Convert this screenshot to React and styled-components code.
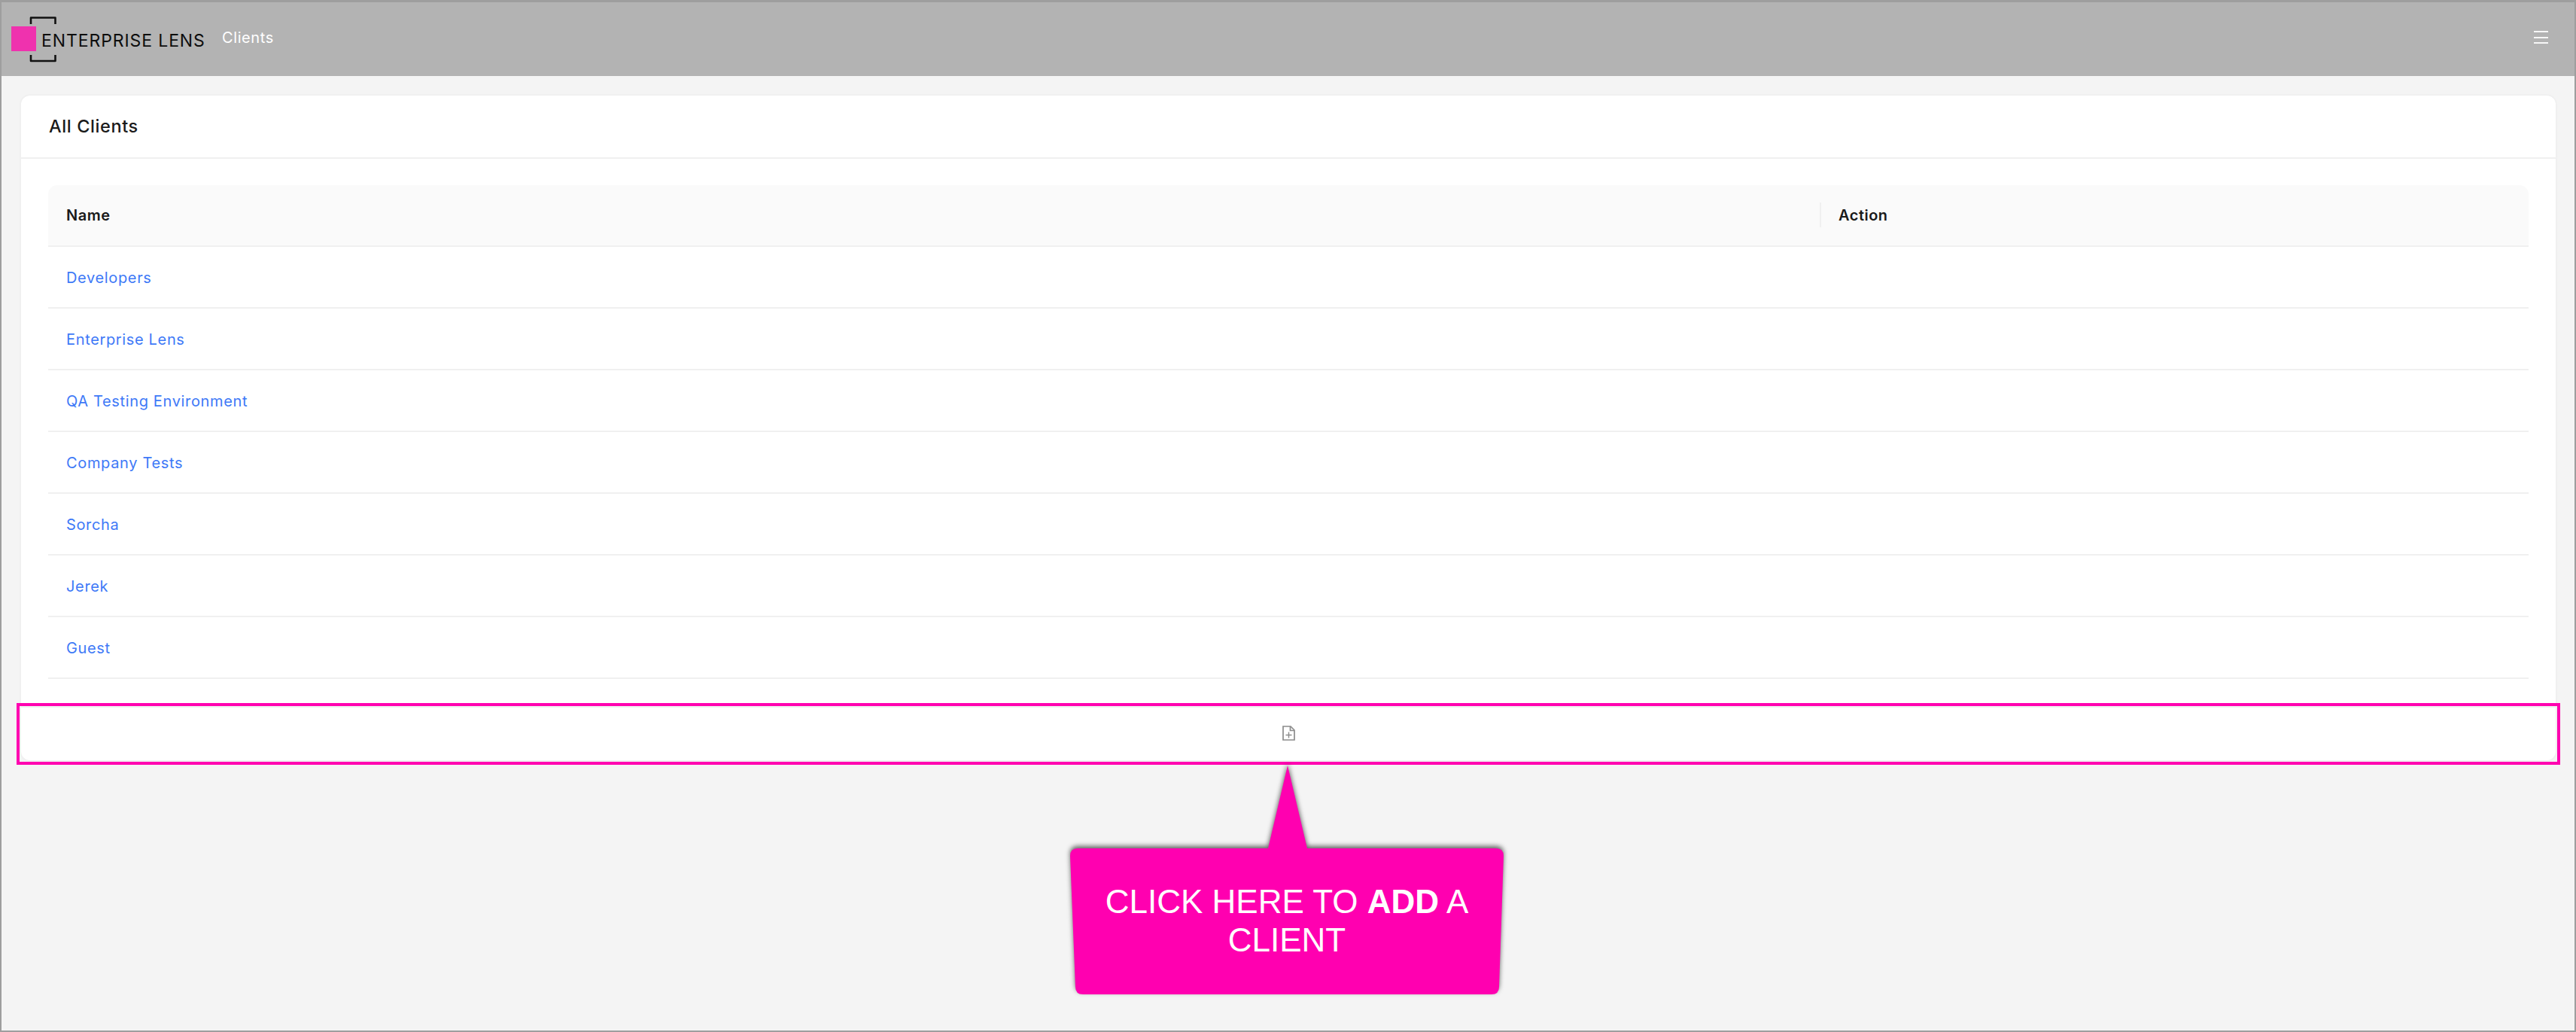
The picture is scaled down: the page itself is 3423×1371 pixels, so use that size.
import React from "react";
import styled, { createGlobalStyle } from "styled-components";

const clients = [
  "Developers",
  "Enterprise Lens",
  "QA Testing Environment",
  "Company Tests",
  "Sorcha",
  "Jerek",
  "Guest",
];

const GlobalStyle = createGlobalStyle`
  html, body {
    margin: 0;
    padding: 0;
    background: #f4f4f4;
  }
  * {
    box-sizing: border-box;
  }
`;

// # Page # //
const Frame = styled.div`
  position: relative;
  width: 3423px;
  height: 1371px;
  overflow: hidden;
  display: flex;
  flex-direction: column;
  background: #f4f4f4;
  border: solid #9e9e9e;
  border-width: 3px 2px 2px 2px;
  font-family: Inter, "Liberation Sans", sans-serif;
`;

const Header = styled.header`
  display: flex;
  align-items: center;
  height: 98px;
  flex: none;
  padding: 0 35px 0 13px;
  background: #b3b3b3;
`;

const Logo = styled.div`
  display: flex;
  align-items: center;
  width: 280px;
`;

const LogoMark = styled.svg`
  display: block;
  flex: none;
`;

const LogoText = styled.span`
  margin-left: -20px;
  margin-top: 4px;
  font-size: 23px;
  letter-spacing: 0.9px;
  line-height: 1;
  color: #0d0d0d;
  white-space: nowrap;
`;

const NavItem = styled.span`
  font-size: 20px;
  margin-top: -5px;
  letter-spacing: 0.6px;
  color: #ffffff;
`;

const MenuIcon = styled.svg`
  display: block;
  margin-left: auto;
  margin-top: -5px;
`;

const Main = styled.main`
  flex: 1;
  padding: 26px 25px 0 26px;
`;

// # Card # //
const Card = styled.section`
  display: flex;
  flex-direction: column;
  height: 883px;
  background: #ffffff;
  border-radius: 12px;
  box-shadow: 0 0 0 2px #f0f0f0;
`;

const CardHead = styled.div`
  display: flex;
  align-items: center;
  height: 84px;
  flex: none;
  padding: 0 37px 2px;
  border-bottom: 2px solid #f0f0f0;
  font-size: 23.5px;
  font-weight: 500;
  letter-spacing: 0.6px;
  color: #1a1a1a;
`;

const CardBody = styled.div`
  flex: 1;
  padding: 35px 36px 0;
`;

const Table = styled.table`
  width: 100%;
  border-collapse: separate;
  border-spacing: 0;
  table-layout: fixed;
`;

const Th = styled.th`
  position: relative;
  width: ${props => props.$width || "auto"};
  height: 82px;
  padding: 0 24px;
  text-align: left;
  font-size: 20px;
  font-weight: 600;
  letter-spacing: 0.5px;
  color: #1a1a1a;
  background: #fafafa;
  border-bottom: 2px solid #f0f0f0;

  &:first-child {
    border-top-left-radius: 12px;
  }
  &:last-child {
    border-top-right-radius: 12px;
    padding-left: 25px;
  }
  &:last-child::before {
    content: "";
    position: absolute;
    left: 0;
    top: 23px;
    width: 2px;
    height: 33px;
    background: #f0f0f0;
  }
`;

const Td = styled.td`
  height: 82px;
  padding: 2px 24px 0;
  border-bottom: 2px solid #f0f0f0;
`;

const ClientLink = styled.a`
  font-size: 20px;
  letter-spacing: 0.65px;
  color: #3e79f7;
  text-decoration: none;
`;

const CardFoot = styled.div`
  display: flex;
  justify-content: center;
  height: 72px;
  flex: none;
  padding-top: 24px;
  border-top: 2px solid #f0f0f0;
`;

const FileIcon = styled.svg`
  display: block;
`;

// # Annotation # //
const Highlight = styled.div`
  position: absolute;
  left: 20px;
  top: 931px;
  width: 3380px;
  height: 82px;
  border: 4px solid #ff00b0;
  pointer-events: none;
`;

const Callout = styled.div`
  position: absolute;
  left: 1420px;
  top: 1014px;
  width: 576px;
  height: 304px;
`;

const CalloutShape = styled.svg`
  position: absolute;
  inset: 0;
  overflow: visible;
  filter: drop-shadow(0 -3px 3px rgba(0, 0, 0, 0.6));
`;

const CalloutText = styled.div`
  position: absolute;
  left: 28px;
  top: 155px;
  width: 520px;
  font-family: "Liberation Sans", Arial, sans-serif;
  font-size: 44px;
  line-height: 51px;
  text-align: center;
  color: #ffffff;
`;

const App = () => {
  return (
    <Frame>
      <GlobalStyle />
      <Header>
        <Logo>
          <LogoMark width="60" height="62" viewBox="0 0 60 62" fill="none">
            <path
              d="M26 11V2.5H58.5V11M26 52V60H58.5V52"
              stroke="#111"
              strokeWidth="2.6"
              strokeLinejoin="round"
            />
            <rect x="0" y="14" width="33" height="33" fill="#ef32ae" />
          </LogoMark>
          <LogoText>ENTERPRISE LENS</LogoText>
        </Logo>
        <NavItem>Clients</NavItem>
        <MenuIcon width="19" height="18" viewBox="0 0 19 18" fill="#f7f7f7">
          <rect y="0" width="19" height="2" />
          <rect y="8" width="19" height="2" />
          <rect y="15" width="19" height="2" />
        </MenuIcon>
      </Header>
      <Main>
        <Card>
          <CardHead>All Clients</CardHead>
          <CardBody>
            <Table>
              <thead>
                <tr>
                  <Th $width="2354px">Name</Th>
                  <Th>Action</Th>
                </tr>
              </thead>
              <tbody>
                {clients.map(name => (
                  <tr key={name}>
                    <Td>
                      <ClientLink href="#">{name}</ClientLink>
                    </Td>
                    <Td />
                  </tr>
                ))}
              </tbody>
            </Table>
          </CardBody>
          <CardFoot>
            <FileIcon width="17" height="20" viewBox="0 0 17 20" fill="none" stroke="#8c8c8c" strokeWidth="1.7">
              <path d="M1 1H11L16 6V19H1Z" />
              <path d="M10.5 1V6.5H16" />
              <path d="M4.5 12.5H12.5M8.5 8.5V16.5" strokeWidth="1.4" />
            </FileIcon>
          </CardFoot>
        </Card>
      </Main>
      <Highlight />
      <Callout>
        <CalloutShape width="576" height="304" viewBox="0 0 576 304">
          <path
            fill="#ff00b0"
            d="M289 0L315 110H566Q576 110 576 120L570 294Q570 304 560 304H17Q7 304 7 294L0 120Q0 110 10 110H263Z"
          />
        </CalloutShape>
        <CalloutText>
          CLICK HERE TO <b>ADD</b> A CLIENT
        </CalloutText>
      </Callout>
    </Frame>
  );
};

export default App;
